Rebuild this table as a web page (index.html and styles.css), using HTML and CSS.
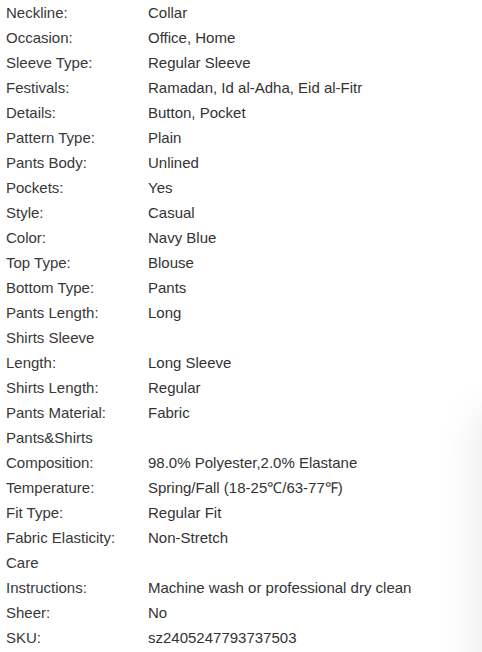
FILE: index.html
```html
<!DOCTYPE html>
<html>
<head>
<meta charset="utf-8">
<link rel="stylesheet" href="styles.css">
</head>
<body>
<div class="page">
<div class="specs">
  <div class="row"><div class="label">Neckline:</div><div class="value">Collar</div></div>
  <div class="row"><div class="label">Occasion:</div><div class="value">Office, Home</div></div>
  <div class="row"><div class="label">Sleeve Type:</div><div class="value">Regular Sleeve</div></div>
  <div class="row"><div class="label">Festivals:</div><div class="value">Ramadan, Id al-Adha, Eid al-Fitr</div></div>
  <div class="row"><div class="label">Details:</div><div class="value">Button, Pocket</div></div>
  <div class="row"><div class="label">Pattern Type:</div><div class="value">Plain</div></div>
  <div class="row"><div class="label">Pants Body:</div><div class="value">Unlined</div></div>
  <div class="row"><div class="label">Pockets:</div><div class="value">Yes</div></div>
  <div class="row"><div class="label">Style:</div><div class="value">Casual</div></div>
  <div class="row"><div class="label">Color:</div><div class="value">Navy Blue</div></div>
  <div class="row"><div class="label">Top Type:</div><div class="value">Blouse</div></div>
  <div class="row"><div class="label">Bottom Type:</div><div class="value">Pants</div></div>
  <div class="row"><div class="label">Pants Length:</div><div class="value">Long</div></div>
  <div class="row"><div class="label">Shirts Sleeve Length:</div><div class="value">Long Sleeve</div></div>
  <div class="row"><div class="label">Shirts Length:</div><div class="value">Regular</div></div>
  <div class="row"><div class="label">Pants Material:</div><div class="value">Fabric</div></div>
  <div class="row"><div class="label">Pants&amp;Shirts Composition:</div><div class="value">98.0% Polyester,2.0% Elastane</div></div>
  <div class="row"><div class="label">Temperature:</div><div class="value">Spring/Fall (18-25℃/63-77℉)</div></div>
  <div class="row"><div class="label">Fit Type:</div><div class="value">Regular Fit</div></div>
  <div class="row"><div class="label">Fabric Elasticity:</div><div class="value">Non-Stretch</div></div>
  <div class="row"><div class="label">Care Instructions:</div><div class="value">Machine wash or professional dry clean</div></div>
  <div class="row"><div class="label">Sheer:</div><div class="value">No</div></div>
  <div class="row"><div class="label">SKU:</div><div class="value">sz2405247793737503</div></div>
</div>
<div class="edge-shadow"></div>
</div>
</body>
</html>
```
FILE: styles.css
```css
html, body {
  margin: 0;
  padding: 0;
  background: #fff;
}
body {
  font-family: "Liberation Sans", Arial, sans-serif;
  font-size: 15px;
  color: #333;
}
.page {
  position: relative;
  width: 482px;
  height: 652px;
  overflow: hidden;
}
.specs {
  padding: 0 0 0 6px;
}
.row {
  display: flex;
  align-items: flex-end;
  line-height: 25px;
}
.label {
  width: 114px;
  flex: none;
  margin-right: 28px;
  color: #383838;
}
.value {
  flex: 1;
  color: #333;
}
.edge-shadow {
  position: absolute;
  left: 482px;
  top: 415px;
  width: 40px;
  height: 320px;
  border-radius: 20px;
  box-shadow: 0 0 40px 8px rgba(0, 0, 0, 0.08);
}
```
